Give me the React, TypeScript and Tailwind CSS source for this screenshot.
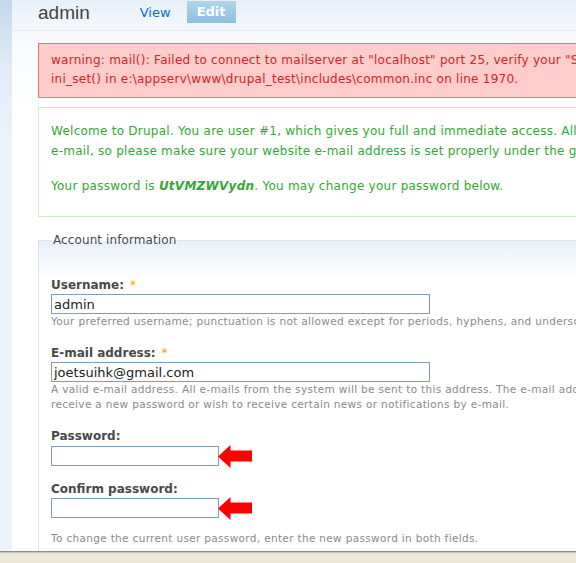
import React from 'react'

const RedArrow = () => (
  <svg width="35" height="23" viewBox="0 0 35 23" className="ml-[-1px] shrink-0">
    <polygon points="0,11.5 12.5,0 12.5,5.5 34,5.5 34,16.5 12.5,16.5 12.5,23" fill="#ff0000" />
  </svg>
)

const Label = ({ text, required }: { text: string; required?: boolean }) => (
  <div className="h-[16px] text-[12px] leading-[16px] font-bold text-[#494949]">
    {text}
    {required && <span className="ml-[6px] font-normal text-[#f5a400]">*</span>}
  </div>
)

const Desc = ({ children }: { children: React.ReactNode }) => (
  <div className="text-[10.5px] leading-[15px] tracking-[0.33px] text-[#8a8a8a] whitespace-nowrap">{children}</div>
)

export default function App() {
  return (
    <div className="flex h-[563px] w-[576px] flex-col overflow-hidden bg-white font-['DejaVu_Sans',Verdana,sans-serif]">
      <div className="flex min-h-0 flex-1">
        {/* left shadow strip */}
        <div className="w-[12px] shrink-0 bg-[linear-gradient(to_bottom,#c3d8ec,#e2edf8_70px,#ecf3fb_160px)]" />

        <div className="min-w-0 flex-1 overflow-hidden bg-[linear-gradient(to_bottom,#f3f7fb,#ffffff_110px)]">
          {/* header with tabs */}
          <div className="flex h-[31px] items-start border-b border-[#e1e8ef] bg-[linear-gradient(to_bottom,#e7f0f9,#f4f8fb)]">
            <div className="ml-[26px] mt-[3px] font-['Liberation_Sans',Arial,sans-serif] text-[19px] leading-[20px] text-[#444]">
              admin
            </div>
            <div className="ml-[50px] mt-[6px] text-[13px] leading-[14px] text-[#0a6fc2]">View</div>
            <div className="ml-[16px] mt-[1px] flex h-[22px] w-[49px] items-center justify-center bg-[linear-gradient(to_bottom,#b1d5eb,#8cbfe0)] text-[13px] font-bold text-white">
              Edit
            </div>
          </div>

          <div className="w-[780px] pl-[26px]">
            {/* error message */}
            <div className="mt-[12px] border border-[#e07a7a] bg-[#ffcccc] px-[12px] pt-[7px] pb-[8px] text-[12px] leading-[19px] tracking-[0.25px] whitespace-nowrap text-[#d42222]">
              warning: mail(): Failed to connect to mailserver at &quot;localhost&quot; port 25, verify your &quot;SMTP&quot; and &quot;smtp_port&quot; setting in php.ini or use
              <br />
              ini_set() in e:\appserv\www\drupal_test\includes\common.inc on line 1970.
            </div>

            {/* status message */}
            <div className="mt-[9px] border border-[#cdf0c6] bg-white px-[12px] pt-[13px] pb-[20px] text-[12px] leading-[20px] tracking-[0.25px] whitespace-nowrap text-[#35a635]">
              <p>
                Welcome to Drupal. You are user #1, which gives you full and immediate access. All future messages will be sent to your
                <br />
                e-mail, so please make sure your website e-mail address is set properly under the general settings on the site information page.
              </p>
              <p className="mt-[15px]">
                Your password is <strong className="italic">UtVMZWVydn</strong>. You may change your password below.
              </p>
            </div>

            {/* account fieldset */}
            <fieldset className="mt-[16px] border border-[#d9e5f0] bg-[linear-gradient(to_bottom,#e9f1f9,#ffffff_40px)] px-[12px] pb-[12px]">
              <legend className="ml-[1px] px-[1px] text-[12px] leading-[15px] tracking-[0.1px] text-[#494949]">Account information</legend>

              <div className="pt-[29px]">
                <Label text="Username:" required />
                <input
                  readOnly
                  value="admin"
                  className="mt-[1px] block h-[20px] w-[379px] border border-[#7f9db9] bg-white px-[2px] text-[13px] text-[#222] outline-none"
                />
                <Desc>Your preferred username; punctuation is not allowed except for periods, hyphens, and underscores.</Desc>

                <div className="mt-[16px]">
                  <Label text="E-mail address:" required />
                  <input
                    readOnly
                    value="joetsuihk@gmail.com"
                    className="mt-[1px] block h-[20px] w-[379px] border border-[#7f9db9] bg-white px-[2px] text-[13px] text-[#222] outline-none"
                  />
                  <Desc>
                    A valid e-mail address. All e-mails from the system will be sent to this address. The e-mail address is not made public and will only be used if you wish to
                    <br />
                    receive a new password or wish to receive certain news or notifications by e-mail.
                  </Desc>
                </div>

                <div className="mt-[16px]">
                  <Label text="Password:" />
                  <div className="mt-[2px] flex h-[20px] items-center">
                    <input type="password" readOnly className="block h-[20px] w-[168px] border border-[#7f9db9] bg-white outline-none" />
                    <RedArrow />
                  </div>
                </div>

                <div className="mt-[15px]">
                  <Label text="Confirm password:" />
                  <div className="mt-[1px] flex h-[20px] items-center">
                    <input type="password" readOnly className="block h-[20px] w-[168px] border border-[#7f9db9] bg-white outline-none" />
                    <RedArrow />
                  </div>
                </div>

                <div className="mt-[13px]">
                  <Desc>To change the current user password, enter the new password in both fields.</Desc>
                </div>
              </div>
            </fieldset>
          </div>
        </div>
      </div>

      {/* browser status bar */}
      <div className="h-[12px] shrink-0 border-t border-[#8f8d85] bg-[#ece9d8] shadow-[inset_0_1px_0_#c8c4b5]" />
    </div>
  )
}
